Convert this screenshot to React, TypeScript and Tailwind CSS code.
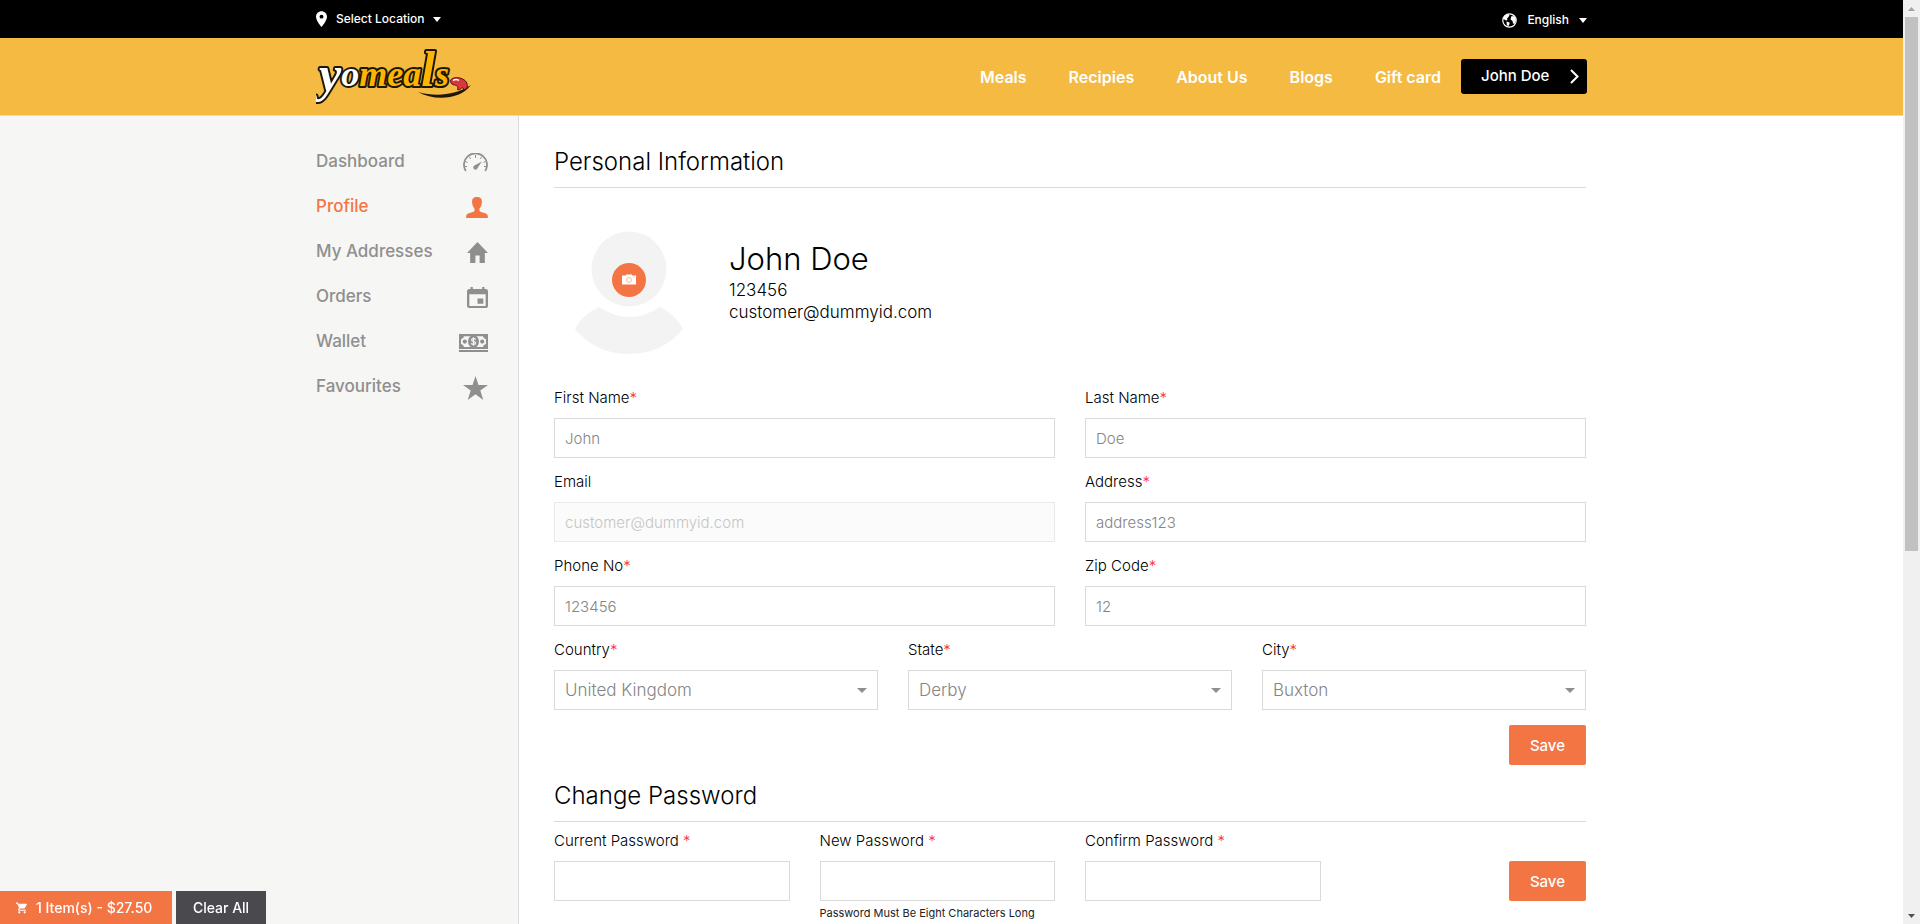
import React, { useState } from "react";
import { MdEvent, MdHome, MdLocationOn, MdShoppingCart } from "react-icons/md";

const navLinks = ["Meals", "Recipies", "About Us", "Blogs", "Gift card"];

function Logo() {
  return (
    <svg width="156" height="77" viewBox="0 -8 156 77" role="img" aria-label="yomeals">
      <g
        fontFamily="'Liberation Serif', serif"
        fontWeight="bold"
        fontStyle="italic"
        fontSize="36"
        stroke="#1c1708"
        strokeWidth="4"
        strokeLinejoin="round"
        paintOrder="stroke"
      >
        <text x="3" y="40">
          <tspan fill="#ffffff" fontSize="50" dy="5">y</tspan>
          <tspan fill="#ffffff" dy="-5">o</tspan>
          <tspan fill="#ffb400">mea</tspan>
          <tspan fill="#ffb400" fontSize="50">l</tspan>
          <tspan fill="#ffb400">s</tspan>
        </text>
      </g>
      <path d="M102 46 C120 51 140 49 155 39 C144 54 118 55 102 46Z" fill="#1c1708" />
      <path
        d="M134.500 35.500C134 31.500 142 30.500 146.500 33C151 35 152 38.500 151 42.500L148.500 43.500L146 41.500L143.500 44L141.500 43.500C142.500 40.500 141 39.500 138.500 39C136.500 38.500 134.700 37.500 134.500 35.500Z"
        fill="#d9363e"
        stroke="#4a1214"
        strokeWidth="1"
      />
      <path d="M137 34.500q3-2 6 0" fill="none" stroke="#fff" strokeWidth="1.500" />
    </svg>
  );
}

function GlobeIcon() {
  return (
    <svg width="15" height="15" viewBox="0 0 15 15" aria-hidden="true">
      <circle cx="7.5" cy="7.5" r="6.7" fill="none" stroke="#fff" strokeWidth="1.2" />
      <path d="M2 3.5L6 1L7.500 2L6.500 4L5 5.500L5.500 7L4 7.500L1.500 6Z" fill="#fff" />
      <path d="M4.500 8.500L7.500 9.500L7.500 11L6.200 13.500L4.800 11.500Z" fill="#fff" />
      <path d="M9.500 3L12.500 3.500L14 7L12.500 11L11 10.500L10.500 8L8.500 6.500Z" fill="#fff" />
    </svg>
  );
}

function Caret({ className }: { className: string }) {
  return (
    <svg width="8" height="5" viewBox="0 0 8 5" className={className} aria-hidden="true">
      <path d="M0 0h8L4 5z" fill="currentColor" />
    </svg>
  );
}

function DashboardIcon() {
  return (
    <svg width="25" height="19" viewBox="0 0 25 19" aria-hidden="true">
      <path d="M2.800 18 A11.500 11.500 0 1 1 22.200 18" fill="none" stroke="currentColor" strokeWidth="1.800" />
      <path
        d="M12.500 2v3M6.500 3.800l1 2M18.500 3.800l-1 2M2.500 8.500l2 1M22.500 8.500l-2 1M1.500 13.500h2.500M23.500 13.500H21"
        stroke="currentColor"
        strokeWidth="1"
      />
      <path d="M18.800 8.500 L14.600 15 A2.200 2.200 0 1 1 11.400 12.600Z" fill="currentColor" />
    </svg>
  );
}

function PersonIcon() {
  return (
    <svg width="22" height="21" viewBox="0 0 22 21" aria-hidden="true">
      <path
        d="M11 0C14.500 0 16 1.800 15.900 4.800C15.900 8 14.800 10.200 13.500 11.600V14C14.500 15.600 21.500 15.600 21.800 19V21H.2V19C.5 15.600 7.500 15.600 8.500 14V11.600C7.200 10.200 6.100 8 6.100 4.800C6 1.800 7.500 0 11 0Z"
        fill="currentColor"
      />
    </svg>
  );
}

function CashIcon() {
  return (
    <svg width="29" height="18" viewBox="0 0 29 18" aria-hidden="true">
      <path d="M0 0h29v15H0zM0 16h29v2H0z" fill="currentColor" />
      <path d="M5 2.200H24A3.500 3.500 0 0 0 27 5.200V10A3.500 3.500 0 0 0 24 13H5A3.500 3.500 0 0 0 2 10V5.200A3.500 3.500 0 0 0 5 2.200Z" fill="#f6f6f4" />
      <ellipse cx="14.500" cy="7.500" rx="5.500" ry="6.500" fill="currentColor" />
      <circle cx="5.800" cy="7.600" r="2.100" fill="currentColor" />
      <circle cx="23.200" cy="7.600" r="2.100" fill="currentColor" />
      <path d="M16.600 5.500C16 4.300 12.600 4.200 12.600 6C12.600 7.800 16.600 7 16.600 9C16.600 11 12.800 10.700 12.300 9.300M14.500 3.300v8.400" fill="none" stroke="#f6f6f4" strokeWidth="1.200" />
    </svg>
  );
}

function StarIcon() {
  return (
    <svg width="25" height="24" viewBox="0 0 25 24" aria-hidden="true">
      <path d="M12.500 0L15.500 9H25L17.300 14.600L20.300 24L12.500 18.300L4.700 24L7.700 14.600L0 9H9.500Z" fill="currentColor" />
    </svg>
  );
}

function HomeIcon() {
  return <MdHome viewBox="2 3 20 17" preserveAspectRatio="none" className="h-[21px] w-[21px]" />;
}

function OrdersIcon() {
  return <MdEvent viewBox="3 1 18 20" preserveAspectRatio="none" className="h-[21px] w-[21px]" />;
}

const sideLinks = [
  { label: "Dashboard", icon: <DashboardIcon /> },
  { label: "Profile", icon: <PersonIcon />, active: true },
  { label: "My Addresses", icon: <HomeIcon /> },
  { label: "Orders", icon: <OrdersIcon /> },
  { label: "Wallet", icon: <CashIcon /> },
  { label: "Favourites", icon: <StarIcon /> },
];

function Label({ id, text, required, spaced }: { id: string; text: string; required?: boolean; spaced?: boolean }) {
  return (
    <label htmlFor={id} className="block h-8 text-[15px] leading-6 font-light text-black">
      {text}
      {spaced && " "}
      {required && <span className="text-[#ff2a3c]">*</span>}
    </label>
  );
}

type FieldProps = {
  id: string;
  label: string;
  value?: string;
  type?: string;
  required?: boolean;
  spaced?: boolean;
  disabled?: boolean;
  hint?: string;
};

function Field({ id, label, value = "", type = "text", required, spaced, disabled, hint }: FieldProps) {
  return (
    <div className="min-w-0">
      <Label id={id} text={label} required={required} spaced={spaced} />
      <input
        id={id}
        type={type}
        defaultValue={value}
        disabled={disabled}
        className="block h-10 w-full border border-[#dadada] bg-white px-2.5 text-[15px] font-light text-[#858585] outline-none disabled:border-[#e9e9e9] disabled:bg-[#fbfbfb] disabled:text-[#c5c5c5]"
      />
      {hint && <p className="pt-1 text-[11px] leading-4 whitespace-nowrap text-[#222222]">{hint}</p>}
    </div>
  );
}

function SelectField({ id, label, value }: { id: string; label: string; value: string }) {
  return (
    <div className="min-w-0">
      <Label id={id} text={label} required />
      <div className="relative">
        <select
          id={id}
          className="block h-10 w-full appearance-none border border-[#dadada] bg-white px-2.5 pt-0.5 text-[17px] font-light text-[#858585] outline-none"
        >
          <option>{value}</option>
        </select>
        <svg width="10" height="5" viewBox="0 0 10 5" className="pointer-events-none absolute top-[18px] right-[11px]" aria-hidden="true">
          <path d="M0 0h10L5 5z" fill="#8f8f8f" />
        </svg>
      </div>
    </div>
  );
}

function SaveButton() {
  return (
    <button type="submit" className="h-10 rounded-xs bg-[#f47544] px-[21px] pt-0.5 text-[15px] font-medium text-white">
      Save
    </button>
  );
}

function SectionTitle({ children }: { children: React.ReactNode }) {
  return <h2 className="border-b border-[#dadada] pb-2 text-2xl leading-[34px] font-light text-black">{children}</h2>;
}

function Avatar() {
  return (
    <div className="grid h-[125px] w-[110px] place-items-center">
      <svg width="110" height="125" viewBox="0 0 110 125" className="col-start-1 row-start-1" aria-hidden="true">
        <circle cx="55" cy="38" r="37.500" fill="#f3f3f3" />
        <path d="M25 76Q55 96 86 76Q101 83 109 98Q88 123 55 123Q22 123 1 98Q9 83 25 76Z" fill="#f3f3f3" />
      </svg>
      <button
        type="button"
        aria-label="Change photo"
        className="col-start-1 row-start-1 mb-7 grid size-[34px] place-items-center rounded-full bg-[#f47544]"
      >
        <svg width="14" height="11" viewBox="0 0 14 11" aria-hidden="true">
          <path d="M0 1.500H4V.5H10V1.500H14V10.500H0Z" fill="#fff" />
          <circle cx="7" cy="6" r="2.500" fill="none" stroke="#f47544" strokeWidth=".5" />
          <path d="M11.500 3h1" stroke="#f47544" strokeWidth=".8" />
        </svg>
      </button>
    </div>
  );
}

function Scrollbar() {
  return (
    <div className="flex w-[17px] shrink-0 flex-col items-center bg-[#f0f0f0]" aria-hidden="true">
      <div className="grid h-[17px] place-items-center">
        <svg width="7" height="4" viewBox="0 0 7 4">
          <path d="M0 4L3.500 0L7 4z" fill="#a3a3a3" />
        </svg>
      </div>
      <div className="w-[13px] flex-3 bg-[#c1c1c1]" />
      <div className="flex-2" />
      <div className="grid h-[17px] place-items-center">
        <svg width="7" height="4" viewBox="0 0 7 4">
          <path d="M0 0h7L3.500 4z" fill="#505050" />
        </svg>
      </div>
    </div>
  );
}

export default function App() {
  const [cartOpen, setCartOpen] = useState(true);

  return (
    <div className="flex h-screen overflow-hidden bg-white font-[Inter,'Open_Sans',sans-serif]">
      <div className="flex min-w-0 flex-1 flex-col">
        <div className="bg-black">
          <div className="mx-auto flex h-[38px] w-full max-w-[1271px] items-center justify-between text-xs font-medium text-white">
            <button type="button" className="flex items-center">
              <MdLocationOn viewBox="5 2 14 20" className="h-4 w-[11px]" />
              <span className="ml-[9px]">Select Location</span>
              <Caret className="ml-2" />
            </button>
            <button type="button" className="flex items-center pt-0.5">
              <GlobeIcon />
              <span className="ml-2.5">English</span>
              <Caret className="ml-2.5" />
            </button>
          </div>
        </div>

        <header className="border-b border-[#dadada] bg-[#f5ba41]">
          <div className="mx-auto flex h-[77px] w-full max-w-[1271px] items-center justify-between">
            <a href="#" aria-label="Home">
              <Logo />
            </a>
            <nav className="flex items-center">
              <div className="mr-5 flex gap-[42px]">
                {navLinks.map((l) => (
                  <a key={l} href="#" className="text-base font-semibold text-white">
                    {l}
                  </a>
                ))}
              </div>
              <button type="button" className="flex h-[35px] w-[126px] items-center justify-between rounded-[3px] bg-black pr-2 pl-5 text-[15px] font-medium text-white">
                John Doe
                <svg width="9" height="15" viewBox="0 0 9 15" aria-hidden="true">
                  <path d="M1 1L7.500 7.500L1 14" fill="none" stroke="#fff" strokeWidth="2" />
                </svg>
              </button>
            </nav>
          </div>
        </header>

        <div className="flex min-h-0 flex-1">
          <div className="flex-1 bg-[#f6f6f4]" />
          <div className="flex min-h-0 w-full max-w-[1271px]">
            <aside className="w-[203px] shrink-0 border-r border-[#dadada] bg-[#f6f6f4] pt-6 pr-[30px]">
              <nav>
                {sideLinks.map((s) => (
                  <a
                    key={s.label}
                    href="#"
                    className={
                      s.active
                        ? "flex h-[45px] items-center justify-between text-[17px] font-medium text-[#f47544]"
                        : "flex h-[45px] items-center justify-between text-[17px] font-medium text-[#8f8f8f]"
                    }
                  >
                    <span className="pb-0.5">{s.label}</span>
                    {s.icon}
                  </a>
                ))}
              </nav>
            </aside>

            <main className="min-w-0 flex-1 pt-[29px] pr-px pl-[35px]">
              <SectionTitle>Personal Information</SectionTitle>
              <div className="flex pt-[43px] pl-5">
                <Avatar />
                <div className="pt-2 pl-[45px] text-black">
                  <h1 className="text-[31px] leading-10 font-light">John Doe</h1>
                  <p className="text-[17px] leading-[22px] font-light">123456</p>
                  <p className="text-[17px] leading-[22px] font-light">customer@dummyid.com</p>
                </div>
              </div>

              <form className="pt-[30px]" onSubmit={(e) => e.preventDefault()}>
                <div className="grid grid-cols-2 gap-x-[30px] gap-y-3">
                  <Field id="first" label="First Name" value="John" required />
                  <Field id="last" label="Last Name" value="Doe" required />
                  <Field id="email" label="Email" value="customer@dummyid.com" disabled />
                  <Field id="address" label="Address" value="address123" required />
                  <Field id="phone" label="Phone No" value="123456" required />
                  <Field id="zip" label="Zip Code" value="12" required />
                </div>
                <div className="grid grid-cols-3 gap-x-[30px] pt-3">
                  <SelectField id="country" label="Country" value="United Kingdom" />
                  <SelectField id="state" label="State" value="Derby" />
                  <SelectField id="city" label="City" value="Buxton" />
                </div>
                <div className="flex justify-end pt-[15px]">
                  <SaveButton />
                </div>
              </form>

              <div className="pt-3.5">
                <SectionTitle>Change Password</SectionTitle>
              </div>
              <form className="grid grid-cols-4 gap-x-[30px] pt-[7px]" onSubmit={(e) => e.preventDefault()}>
                <Field id="current" label="Current Password" type="password" required spaced />
                <Field id="new" label="New Password" type="password" required spaced hint="Password Must Be Eight Characters Long" />
                <Field id="confirm" label="Confirm Password" type="password" required spaced />
                <div className="flex items-start justify-end pt-8">
                  <SaveButton />
                </div>
              </form>
            </main>
          </div>
          <div className="flex-1" />
        </div>
      </div>
      <Scrollbar />

      {cartOpen && (
        <div className="fixed bottom-0 left-0 flex h-[33px] gap-1 text-sm font-medium text-white">
          <button type="button" className="flex w-[172px] items-center gap-2 bg-[#f47544] pl-4 whitespace-nowrap">
            <MdShoppingCart viewBox="1 2 22 20" className="h-3 w-3" />
            1 Item(s) - $27.50
          </button>
          <button type="button" className="w-[90px] bg-[#49494e]" onClick={() => setCartOpen(false)}>
            Clear All
          </button>
        </div>
      )}
    </div>
  );
}
